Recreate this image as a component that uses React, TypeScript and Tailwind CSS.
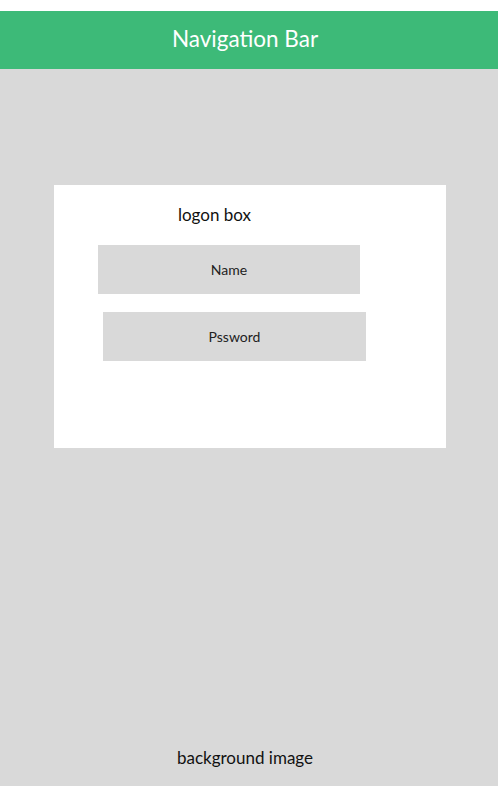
import React from "react";

export default function App() {
  const font = { fontFamily: '"Lato", "Open Sans", sans-serif' };
  return (
    <div className="w-[498px] h-[786px] flex flex-col bg-white" style={font}>
      <div className="h-[11px] bg-white" />
      <div className="h-[58px] bg-[#3dba78] flex items-center justify-center">
        <span className="text-white text-[22.5px] leading-none -ml-[8px] -mt-[2px]">Navigation Bar</span>
      </div>
      <div className="flex-1 bg-[#d9d9d9] flex flex-col">
        <div className="mt-[116px] ml-[54px] w-[392px] h-[263px] bg-white flex flex-col">
          <div className="mt-[18px] ml-[124px] text-[17px] leading-[24px] text-[#111]">logon box</div>
          <div className="mt-[18px] ml-[44px] w-[262px] h-[49px] bg-[#d9d9d9] flex items-center justify-center text-[14px] text-[#222]">
            Name
          </div>
          <div className="mt-[18px] ml-[49px] w-[263px] h-[49px] bg-[#d9d9d9] flex items-center justify-center text-[14px] text-[#222]">
            Pssword
          </div>
        </div>
        <div className="mt-auto mb-[16px] text-center text-[17px] leading-[24px] text-[#111]">
          <span className="inline-block -ml-[8px]">background image</span>
        </div>
      </div>
    </div>
  );
}
